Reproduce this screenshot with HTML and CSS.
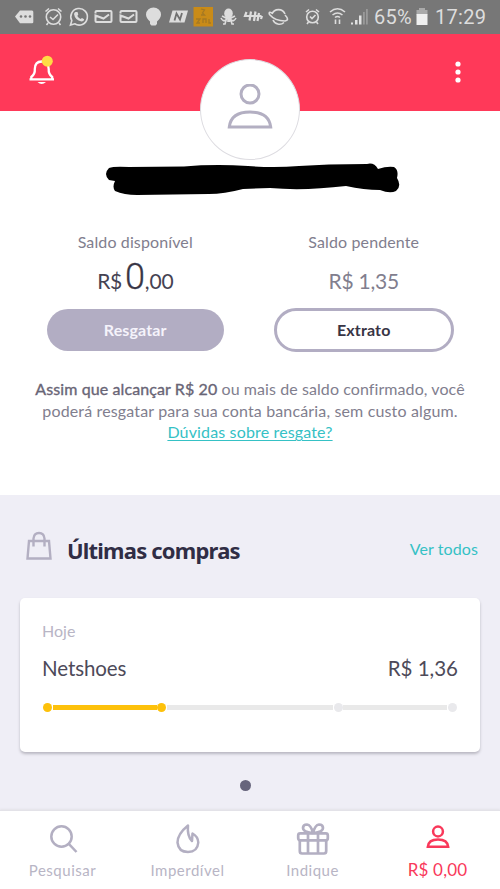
FILE: index.html
```html
<!DOCTYPE html>
<html lang="pt-BR">
<head>
<meta charset="utf-8">
<meta name="viewport" content="width=device-width">
<title>Saldo</title>
<link rel="stylesheet" href="styles.css">
</head>
<body>
<div class="status">
  <div class="status-left">
    <svg class="tag" viewBox="0 0 28 34"><path d="M5 16.5L10 10.5H22Q23.300 10.500 23.300 12V22Q23.300 23.300 22 23.300H10Z" fill="#ddd"/><g fill="#777"><circle cx="11" cy="16.500" r="1.300"/><circle cx="15.500" cy="16.500" r="1.300"/><circle cx="20" cy="16.500" r="1.300"/></g></svg>
    <svg viewBox="0 0 25 34"><g class="line"><circle cx="12.500" cy="17" r="7.200"/><path d="M4.500 11.500L8 8.500M20.500 11.500L17 8.500M7 23L5.500 25M18 23L19.500 25M9 17L12 19.500L17 14.500"/></g></svg>
    <svg viewBox="0 0 25 34"><g class="line"><path d="M4.500 25L5.800 20.700A8.300 8.300 0 1 1 8.700 23.800Z"/></g><path d="M9.500 12L11.500 12L12.300 14.500L11.300 16Q12.500 18 14.500 19L16 18L18.200 19.200Q18 21.500 15.500 21.600Q9 20.200 8 14Q8.200 12.500 9.500 12Z" fill="#ddd"/></svg>
    <svg viewBox="0 0 25 34"><g class="line mail"><path d="M4.500 13.500V12Q4.500 11 5.500 11H19.500Q20.500 11 20.500 12V21Q20.500 22 19.500 22H5.500Q4.500 22 4.500 21V15.500L12.500 18.500L18 14.500"/></g></svg>
    <svg viewBox="0 0 25 34"><g class="line mail"><path d="M4.500 13.500V12Q4.500 11 5.500 11H19.500Q20.500 11 20.500 12V21Q20.500 22 19.500 22H5.500Q4.500 22 4.500 21V15.500L12.500 18.500L18 14.500"/></g></svg>
    <svg viewBox="0 0 25 34"><path d="M9 21.500Q5 18 5 14.500A7.500 7 0 0 1 20 14.500Q20 18 16 21.500V24L14.500 25.500H10.500L9 24Z" fill="#ddd"/></svg>
    <svg viewBox="0 0 25 34"><path d="M6.500 10.500H22L18.500 22.500H3Z" fill="#ddd"/><path d="M8.500 20.500L10.500 13.500L14 19.500L16 13" fill="none" stroke="#707070" stroke-width="1.800"/></svg>
    <svg viewBox="0 0 25 34"><path d="M2.500 7H22V26.500H2.500Z" fill="#c98b18"/><path d="M10 9L13.500 10L11.500 13L13.500 15H10M5 19H9L6 23H9M12 23V19H15V23M18 19V23H20" fill="none" stroke="#a57923" stroke-width="1.300"/></svg>
    <svg viewBox="0 0 25 34"><ellipse cx="12.500" cy="13.500" rx="4.300" ry="5" fill="#ddd"/><g class="line"><path d="M11 16L10 20Q7 22 5 18M14 16L15 20Q18 22 20 18M11 17L9 24H7M14 17L16 24H18M12 16V22M13.500 16V22M10 18L6 16M15 18L19 16"/></g></svg>
    <svg viewBox="0 0 25 34"><g class="line thick"><path d="M5.500 12L4 16H20.500M10 11.500L8.500 20.500M14.500 11.500L13 21M18 13L16.500 21M21 16L20 19"/></g></svg>
    <svg viewBox="0 0 25 34"><g class="line"><path d="M6 14A7 7 0 0 1 19 14M7 20A7 7 0 0 0 18 22.500M6 13Q2 11 3.500 14.500Q9 21 19 21Q24 20 19 15"/></g></svg>
  </div>
  <div class="status-right">
    <svg viewBox="0 0 25 34"><g class="line"><circle cx="12.500" cy="17" r="5.800"/><path d="M6 12L9 9.500M19 12L16 9.500M8.500 22L7 24M16.500 22L18 24M10 16.500L12 18.500L15.500 15"/></g></svg>
    <svg viewBox="0 0 25 34"><g class="line"><path d="M5 12Q12.500 5.500 20 12M7.500 15Q12.500 11 17.500 15M10 17.500Q12.500 15.500 15 17.500M10.500 19.500V24M14.500 19.500V24"/></g></svg>
    <svg class="signal" viewBox="0 0 20 34"><path d="M1 24.500V22.500H3V24.500ZM5 24.500V20H7.500V24.500ZM9 24.500V15.500H11.500V24.500Z" fill="#e2e2e2"/><path d="M13 24.500V12H14.800V24.500ZM16 24.500V9H17.800V24.500Z" fill="#999"/></svg>
    <span class="percent">65%</span>
    <svg class="battery" viewBox="0 0 12 34"><path d="M3 8H9V10H11.500V14.500H.5V10H3Z" fill="#aaa"/><path d="M.5 14H11.500V25H.5Z" fill="#f0f0f0"/></svg>
    <span class="clock">17:29</span>
  </div>
</div>

<header class="topbar">
  <svg class="bell" viewBox="0 0 30 34"><path d="M2.500 24.300H27M4.300 23.500V22Q8.200 19 7.800 14Q8 6.500 14.500 6.500Q21.500 6.500 21.700 14Q21.300 19 25.200 22V23.500" fill="none" stroke="#fff" stroke-width="2.300"/><path d="M10.500 27H19Q14.700 31 10.500 27Z" fill="#fff"/><circle cx="20.300" cy="6.200" r="5.500" fill="#ffdb45"/></svg>
  <div class="avatar"><svg viewBox="0 0 46 46"><g fill="none" stroke="#b3afc2" stroke-width="3"><circle cx="23" cy="10" r="9"/><path d="M2.300 43Q4 28 23 28Q42 28 43.700 43Z"/></g></svg></div>
  <svg class="more" viewBox="0 0 8 24"><g fill="#fff"><circle cx="4" cy="4" r="2.600"/><circle cx="4" cy="12" r="2.600"/><circle cx="4" cy="20" r="2.600"/></g></svg>
</header>

<main>
  <section class="summary">
    <svg class="scribble" viewBox="0 0 298 36"><path d="M5 5Q10 3 25 4L80 3.500Q110 1 144 3Q170 5 195 3L225 1.500L263 1Q270 -1 274 6Q283 3 290 4Q295 7 293 15Q298 23 292 28Q286 31 276 27Q260 27 242 23Q200 28 166 25L139 26Q120 31 105 31L33 32Q20 32 11 28Q8 24 11 18L5 17Q-1 11 5 5Z"/></svg>
    <div class="balances">
      <div class="balance">
        <div class="label">Saldo disponível</div>
        <div class="amount dark"><span>R$</span><span class="big">0</span><span>,00</span></div>
        <button class="btn filled">Resgatar</button>
      </div>
      <div class="balance">
        <div class="label">Saldo pendente</div>
        <div class="amount">R$ 1,35</div>
        <button class="btn outline">Extrato</button>
      </div>
    </div>
    <p class="info"><b>Assim que alcançar R$ 20</b> ou mais de saldo confirmado, você<br><span class="wide">poderá resgatar para sua conta bancária, sem custo algum.</span><br><a class="wide">Dúvidas sobre resgate?</a></p>
  </section>

  <section class="purchases">
    <div class="heading">
      <svg class="bag" viewBox="0 0 26 30"><g fill="none" stroke="#b3afc2" stroke-width="2.400"><path d="M3 10H23L24.500 27.500H1.500ZM7.500 15.500V7.500Q8 2 13 2Q18 2 18.500 7.500V15.500"/></g></svg>
      <h2>Últimas compras</h2>
      <a class="all">Ver todos</a>
    </div>
    <article class="card">
      <div class="date">Hoje</div>
      <div class="row"><span class="store">Netshoes</span><span class="price">R$ 1,36</span></div>
      <div class="track"><i class="dot on"></i><i class="bar on"></i><i class="dot on"></i><i class="bar long"></i><i class="dot"></i><i class="bar"></i><i class="dot"></i></div>
    </article>
    <div class="page-dot"></div>
  </section>
</main>

<nav class="tabs">
  <div class="tab"><svg viewBox="0 0 34 34"><g fill="none" stroke="#b3afc2" stroke-width="2.500"><circle cx="15.500" cy="15.500" r="10.200"/><path d="M22.800 22.800L30.500 31"/></g></svg><span>Pesquisar</span></div>
  <div class="tab"><svg viewBox="0 0 34 34"><path d="M17 4.500Q6.500 13 6.500 21.500Q7.500 31 17 31Q26.500 31 27.300 21.500Q27 15.500 21.500 12.500L21 20Q16 15 17 4.500Z" fill="none" stroke="#b3afc2" stroke-width="2.500" stroke-linejoin="round"/></svg><span>Imperdível</span></div>
  <div class="tab"><svg viewBox="0 0 34 34"><g fill="none" stroke="#b3afc2" stroke-width="2.700" stroke-linejoin="round"><rect x="2.200" y="12.300" width="29.600" height="7" rx="2"/><path d="M3.800 19.500V30Q3.800 32.500 6 32.500H28Q30.200 32.500 30.200 30V19.500M12 12.500V32.500M22 12.500V32.500M16 12Q7 11 7 7Q7 3.500 11 3.500Q15 4 17 12Q19 4 23 3.500Q27 3.500 27 7Q27 11 18 12"/></g></svg><span>Indique</span></div>
  <div class="tab active"><svg viewBox="0 0 34 34"><g fill="none" stroke="#f9385a" stroke-width="2.500"><circle cx="17" cy="10.500" r="4.900"/><path d="M6.800 25.800Q7.500 18.500 17 18.500Q26.500 18.500 27.200 25.800Z"/></g></svg><span>R$ 0,00</span></div>
</nav>
</body>
</html>
```

FILE: styles.css
```css
* { box-sizing: border-box; }
body { margin: 0; width: 500px; height: 889px; overflow: hidden; display: flex; flex-direction: column; background: #fff; color: #817e8e; font-family: Lato, "Open Sans", sans-serif; font-size: 16px; }
svg { display: block; flex: none; }

.status { height: 34px; flex: none; background: #777; display: flex; justify-content: space-between; color: #ddd; }
.status-left, .status-right { display: flex; align-items: center; }
.status-left { padding-left: 10px; }
.status-left svg, .status-right svg { width: 25px; height: 34px; }
.status-left .tag { width: 31px; padding-right: 3px; }
.status-right { width: 200px; font: 20px/34px Roboto, sans-serif; }
.status-right .signal { width: 20px; }
.status-right .battery { width: 12px; }
.percent { width: 46px; padding-left: 4px; letter-spacing: .3px; }
.clock { margin-left: 7px; letter-spacing: .3px; }
.line { fill: none; stroke: #ddd; stroke-width: 1.6; }
.mail { stroke-width: 2; }
.thick { stroke-width: 2.2; }

.topbar { height: 77px; flex: none; background: #ff3959; display: grid; grid-template-columns: 173px 100px 1fr; align-items: start; padding: 0 38px 0 27px; }
.bell { width: 30px; height: 34px; margin-top: 21px; }
.avatar { width: 100px; height: 101px; margin-top: 25px; border-radius: 50%; background: #fff; border: 1px solid #dddce1; display: grid; place-items: center; position: relative; }
.avatar svg { width: 46px; height: 46px; margin-top: -6px; }
.more { width: 8px; height: 24px; margin-top: 26px; justify-self: end; }

main { flex: 1; display: flex; flex-direction: column; }
.summary { height: 384px; padding-top: 52px; text-align: center; }
.scribble { width: 298px; height: 36px; margin: 0 auto; transform: translateX(3px); overflow: visible; }
.balances { display: grid; grid-template-columns: 1fr 1fr; padding: 31px 22px 0 21px; }
.balance { display: flex; flex-direction: column; align-items: center; }
.label { line-height: 24px; letter-spacing: .12px; }
.amount { height: 44px; margin-top: 3px; font-size: 21px; line-height: 48px; letter-spacing: -.2px; white-space: pre; }
.amount.dark { color: #454252; display: flex; align-items: baseline; line-height: 43px; margin-top: 2px; height: 46px; }
.big { font: 300 36px/43px Roboto, sans-serif; margin-left: 3px; color: #383545; -webkit-text-stroke: .3px #383545; }
.btn { width: 177px; height: 42px; padding: 0; border-radius: 21px; font: bold 16px/20px Lato, sans-serif; margin-top: 7px; letter-spacing: .15px; }
.filled { background: #b2adc3; border: 0; color: #f5f3fb; }
.outline { width: 180px; height: 44px; border-radius: 22px; background: #fff; border: 3px solid #b2adc3; color: #383545; }
.info { margin: 26px 0 0; line-height: 21.5px; letter-spacing: .08px; white-space: nowrap; }
.info b { color: #696576; font-weight: 400; -webkit-text-stroke: .35px #696576; letter-spacing: .1px; }
.info .wide { letter-spacing: .15px; }
.info a, .all { color: #35c1c5; }
.info a { text-decoration: underline; text-underline-offset: 2px; text-decoration-thickness: 1px; }

.purchases { flex: 1; background: #efeef6; }
.heading { height: 103px; display: flex; align-items: center; padding: 8px 22px 0 26px; }
.bag { width: 26px; height: 30px; margin-top: -10px; }
h2 { margin: -1px auto 0 15px; font: bold 22px/30px "Noto Sans", sans-serif; letter-spacing: -.8px; color: #302d45; }
.all { margin-top: -4px; letter-spacing: .1px; }
.card { height: 154px; margin: 0 20px; padding: 21px 22px; border-radius: 5px; background: #fff; box-shadow: 0 2px 3px #b9b7c1; }
.date { color: #b8b5c5; line-height: 24px; }
.row { display: flex; justify-content: space-between; line-height: 28px; margin-top: 11px; font-size: 20.5px; color: #4d4a59; }
.store { letter-spacing: -.1px; }
.track { display: flex; align-items: center; height: 10px; margin: 20px 1px 0; }
.dot { width: 9px; height: 9px; border-radius: 50%; background: #e9e9ec; flex: none; }
.bar { height: 5px; margin: 0 .5px; background: #e9e9e9; flex: 104px 1 1; }
.bar.long { flex-basis: 166px; }
.dot.on, .bar.on { background: #fdc10b; }
.page-dot { width: 11px; height: 11px; border-radius: 50%; background: #67657c; margin: 28px auto 0; transform: translateX(-5px); }

.tabs { height: 79px; flex: none; background: #fff; border-top: 1px solid #e3e2e8; display: grid; grid-template-columns: repeat(4, 1fr); box-shadow: 0 -1px 2px #e3e2e8; position: relative; }
.tab { display: flex; flex-direction: column; align-items: center; padding-top: 10px; font-size: 15px; line-height: 24px; letter-spacing: .5px; color: #b8b5c5; }
.tab svg { width: 34px; height: 34px; margin-bottom: 3px; }
.active { color: #f9385a; font-size: 17px; letter-spacing: .2px; }
```
